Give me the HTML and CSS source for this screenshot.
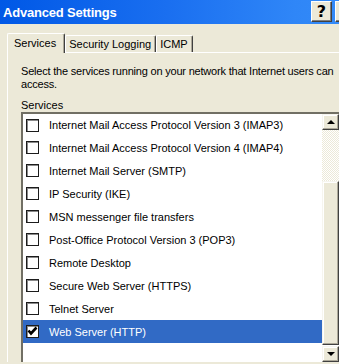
FILE: index.html
```html
<!DOCTYPE html>
<html lang="en">
<head>
    <meta charset="UTF-8">
    <title>Advanced Settings</title>
    <link rel="stylesheet" href="styles.css">
</head>
<body>
    <div class="window">
        <div class="titlebar">
            <span class="title">Advanced Settings</span>
            <div class="caption-buttons">
                <span class="cap-btn help">?</span>
                <span class="cap-btn close"></span>
            </div>
        </div>
        <div class="dialog">
            <div class="tabs">
                <div class="tab selected">Services</div>
                <div class="tab">Security Logging</div>
                <div class="tab">ICMP</div>
            </div>
            <div class="panel">
                <p class="intro">Select the services running on your network that Internet users can access.</p>
                <div class="list-label">Services</div>
                <div class="listbox">
                    <div class="rows">
                        <div class="row"><span class="check"></span>Internet Mail Access Protocol Version 3 (IMAP3)</div>
                        <div class="row"><span class="check"></span>Internet Mail Access Protocol Version 4 (IMAP4)</div>
                        <div class="row"><span class="check"></span>Internet Mail Server (SMTP)</div>
                        <div class="row"><span class="check"></span>IP Security (IKE)</div>
                        <div class="row"><span class="check"></span>MSN messenger file transfers</div>
                        <div class="row"><span class="check"></span>Post-Office Protocol Version 3 (POP3)</div>
                        <div class="row"><span class="check"></span>Remote Desktop</div>
                        <div class="row"><span class="check"></span>Secure Web Server (HTTPS)</div>
                        <div class="row"><span class="check"></span>Telnet Server</div>
                        <div class="row active">
                            <span class="check">
                                <svg width="11" height="11" viewBox="0 0 11 11"><path d="M1.5 4.5 L4 7.5 L9.5 1.5" fill="none" stroke="#000" stroke-width="2.6"/></svg>
                            </span>Web Server (HTTP)
                        </div>
                    </div>
                    <div class="scrollbar">
                        <div class="sb-btn"><span class="arrow up"></span></div>
                        <div class="sb-track"></div>
                        <div class="sb-thumb"></div>
                        <div class="sb-btn"><span class="arrow down"></span></div>
                    </div>
                </div>
            </div>
        </div>
    </div>
</body>
</html>
```

FILE: styles.css
```css
body {
    margin: 0;
    width: 339px;
    height: 364px;
    overflow: hidden;
    background: #ece9d8;
    font-family: "Liberation Sans", Arial, sans-serif;
    font-size: 11px;
    color: #000;
}
.window {
    width: 420px;
}
.titlebar {
    height: 24px;
    display: flex;
    align-items: center;
    background: linear-gradient(to right, #0058e6 0%, #1a6ff0 40%, #2f86f7 70%, #3b92fb 100%);
}
.title {
    width: 308px;
    flex: none;
    color: #fff;
    font-weight: bold;
    font-size: 13px;
    padding-left: 3px;
    letter-spacing: -0.2px;
}
.caption-buttons {
    display: flex;
    gap: 3px;
    align-self: flex-start;
    padding-top: 1px;
}
.cap-btn {
    width: 19px;
    height: 19px;
    background: #ece9d8;
    border-top: 1px solid #fff;
    border-left: 1px solid #fff;
    border-right: 1px solid #404040;
    border-bottom: 1px solid #404040;
    box-shadow: inset -1px -1px #808080;
    display: flex;
    align-items: center;
    justify-content: center;
}
.help {
    font-family: "DejaVu Sans", sans-serif;
    font-weight: bold;
    font-size: 16px;
}
.dialog {
    padding: 8px 0 0 7px;
}
.tabs {
    display: flex;
    align-items: flex-end;
    height: 20px;
}
.tab {
    height: 16px;
    line-height: 16px;
    padding: 0 4px 0 3px;
    border-top: 1px solid #fff;
    border-left: 1px solid #fff;
    border-right: 1px solid #404040;
    box-shadow: inset -1px 0 #aca899;
    border-radius: 2px 2px 0 0;
}
.tab.selected {
    height: 19px;
    line-height: 19px;
    padding: 0 8px 0 6px;
    position: relative;
    top: 1px;
    background: #ece9d8;
}
.panel {
    border-top: 1px solid #fff;
    border-left: 1px solid #fff;
    padding: 12px 0 0 13px;
}
.intro {
    margin: 0;
    width: 318px;
    line-height: 13px;
    letter-spacing: -0.2px;
}
.list-label {
    margin-top: 8px;
    line-height: 13px;
}
.listbox {
    margin-top: 0;
    display: flex;
    width: 340px;
    border-top: 2px solid #716f64;
    border-left: 2px solid #716f64;
    background: #fff;
}
.rows {
    width: 299px;
    flex: none;
}
.row {
    height: 23px;
    display: flex;
    align-items: center;
    padding-left: 3px;
    white-space: nowrap;
}
.row:first-child {
    height: 22px;
}
.row.active {
    background: #316ac5;
    color: #fff;
}
.check {
    width: 11px;
    height: 11px;
    border: 1px solid #1c1c1c;
    box-shadow: inset 1px 1px #8a8a8a;
    background: #fff;
    margin-right: 10px;
    flex: none;
    display: flex;
}
.scrollbar {
    width: 17px;
    flex: none;
    display: flex;
    flex-direction: column;
}
.sb-btn, .sb-thumb {
    background: #ece9d8;
    border-top: 1px solid #f6f5ef;
    border-left: 1px solid #f6f5ef;
    border-right: 1px solid #404040;
    border-bottom: 1px solid #404040;
    box-shadow: inset -1px -1px #aca899, inset 1px 1px #fff;
    box-sizing: border-box;
}
.sb-btn {
    height: 16px;
    display: flex;
    align-items: center;
    justify-content: center;
}
.sb-track {
    height: 51px;
    background: repeating-conic-gradient(#fff 0 25%, #ece9d8 0 50%) 0 0 / 2px 2px;
}
.sb-thumb {
    height: 164px;
}
.sb-btn + .sb-thumb, .sb-thumb + .sb-btn {
    margin-top: 1px;
}
.arrow {
    width: 0;
    height: 0;
    border-left: 4px solid transparent;
    border-right: 4px solid transparent;
}
.arrow.up {
    border-bottom: 4px solid #000;
}
.arrow.down {
    border-top: 4px solid #000;
}
```
